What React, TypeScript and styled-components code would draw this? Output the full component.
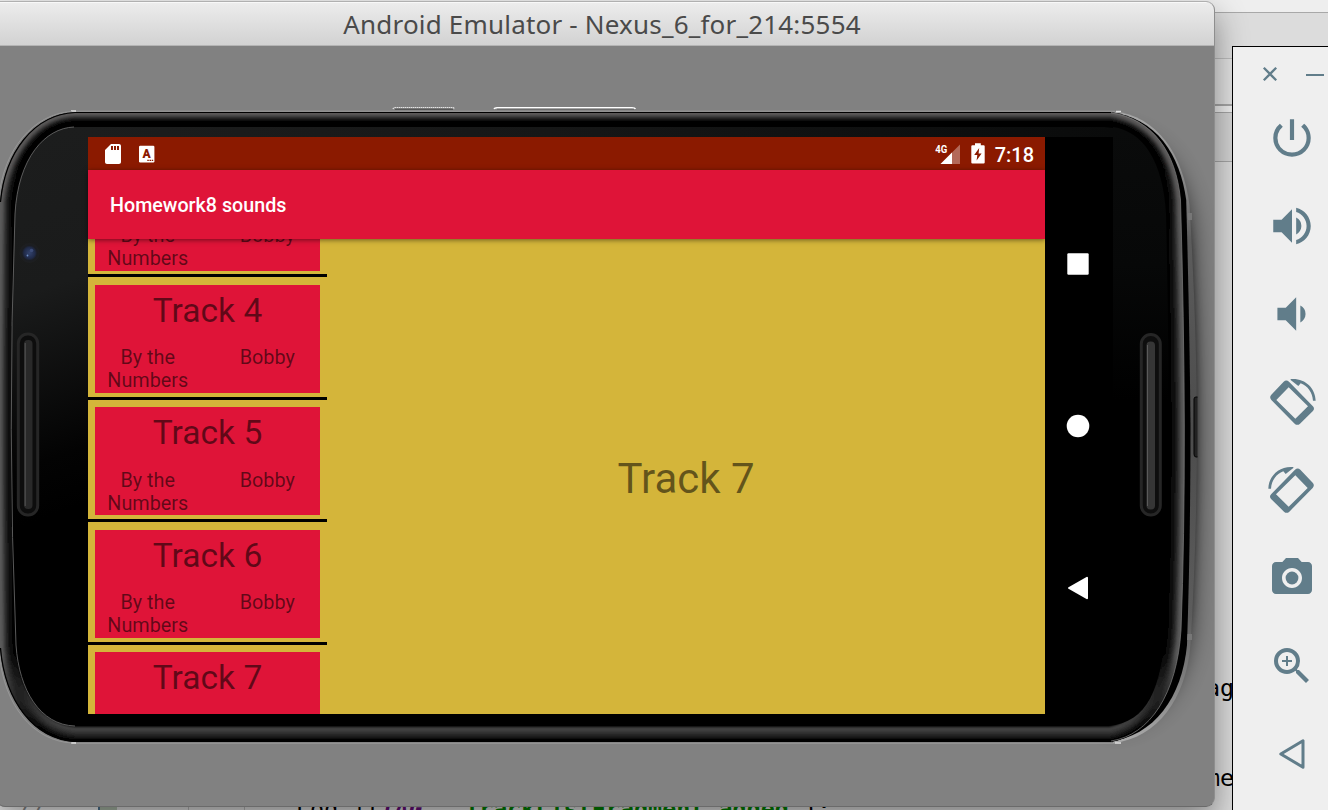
import React from 'react';
import styled, { createGlobalStyle } from 'styled-components';
import {
  MdPowerSettingsNew,
  MdVolumeUp,
  MdVolumeDown,
  MdCameraAlt,
  MdZoomIn,
  MdSdCard,
} from 'react-icons/md';

const SLATE = '#617d8a';
const RED = '#df1438';
const RUST = '#8b1a00';
const GOLD = '#d4b53a';

const GlobalStyle = createGlobalStyle`
  html, body { margin: 0; padding: 0; overflow: hidden; }
  * { box-sizing: border-box; }
`;

const Desktop = styled.main`
  position: relative;
  width: 1328px;
  height: 810px;
  overflow: hidden;
  background: #d6d6d6;
  font-family: Roboto, "Liberation Sans", sans-serif;
`;

/* ---------- code editor behind the emulator ---------- */

const Editor = styled.div`
  display: flex;
  flex-direction: column;
  width: 1328px;
  height: 810px;
`;

const Strip = styled.div<{ $h: number; $bg: string; $line: string; $lw?: number }>`
  flex: none;
  height: ${(p) => p.$h}px;
  background: ${(p) => p.$bg};
  border-bottom: ${(p) => p.$lw ?? 1}px solid ${(p) => p.$line};
`;

const Code = styled.div`
  flex: 1;
  padding-top: 510.5px;
  background: #dcdcdc;
  font: 23.4px/30.2px "DejaVu Sans Mono", monospace;
  color: #000;
`;

const CodeLine = styled.div<{ $indent: number }>`
  height: 30.2px;
  padding-left: ${(p) => p.$indent}px;
  white-space: pre;
`;

const LastLine = styled.div`
  display: flex;
  height: 30px;
  padding-top: 1px;
  white-space: pre;
`;

const Gutter = styled.span`
  width: 98px;
  padding-left: 18px;
  background: #ececec;
  color: #8a8a8a;
  font-style: italic;
`;

const FoldMark = styled.span`
  width: 19px;
  margin-right: 71px;
  border-left: 2px solid #4d7390;
  background: #a9b8a6;
`;

const IndentGuide = styled.span<{ $w: number }>`
  width: ${(p) => p.$w}px;
  border-left: 1px solid #b4b4b4;
`;

const Constant = styled.em`
  color: #660e7a;
  font-weight: 700;
`;

const Str = styled.b`
  color: #008000;
`;

/* ---------- emulator window ---------- */

const Window = styled.section`
  position: absolute;
  left: -4px;
  top: 1px;
  width: 1219px;
  height: 806px;
  display: flex;
  flex-direction: column;
  overflow: hidden;
  border: 1px solid #a0a0a0;
  border-color: #b0b0b0 #8e8e8e #6a6a6a;
  border-radius: 0 9px 9px 9px;
  background: #818181;
`;

const WindowShadow = styled.div`
  position: absolute;
  left: -4px;
  top: 1px;
  width: 1219px;
  height: 806px;
  border-radius: 9px;
  box-shadow: 0 14px 32px rgba(0, 0, 0, 0.42);
`;

const TitleBar = styled.header`
  flex: none;
  display: flex;
  align-items: center;
  justify-content: center;
  height: 44px;
  padding-right: 7px;
  border-top: 1px solid #f8f8f8;
  border-bottom: 1px solid #b4b4b4;
  background: linear-gradient(#ececec, #d2d2d2);
  color: #4a4a4a;
  font-family: "Noto Sans", sans-serif;
  font-size: 26px;
  line-height: 42px;
  letter-spacing: 0.19px;
  white-space: nowrap;
`;

const Stage = styled.div`
  position: relative;
  flex: 1;
  padding: 91px 0 0 91px;
`;

const PhoneArt = styled.svg`
  position: absolute;
  left: 3px;
  top: 0;
  width: 1214px;
  height: 761px;
`;

const Display = styled.div`
  position: relative;
  display: flex;
  width: 1025px;
  height: 577.4px;
  background: #000;
`;

const AppScreen = styled.div`
  display: flex;
  flex-direction: column;
  width: 957px;
  height: 100%;
  background: ${GOLD};
`;

const StatusBar = styled.div`
  flex: none;
  display: flex;
  align-items: center;
  justify-content: space-between;
  height: 33.4px;
  padding: 0 11px 0 13px;
  background: ${RUST};
  color: #fff;
`;

const StatusGroup = styled.div<{ $gap: number }>`
  display: flex;
  align-items: center;
  gap: ${(p) => p.$gap}px;
`;

const Clock = styled.span`
  font-size: 20px;
  font-weight: 500;
  line-height: 34px;
  padding-top: 2px;
`;

const AppBar = styled.div`
  position: relative;
  z-index: 1;
  flex: none;
  display: flex;
  align-items: center;
  height: 68.2px;
  padding: 2px 0 0 22px;
  background: ${RED};
  box-shadow: 0 1px 5px rgba(0, 0, 0, 0.5);
  color: #fff;
  font-size: 19.7px;
  font-weight: 500;
`;

const Panes = styled.div`
  flex: 1;
  display: flex;
  min-height: 0;
`;

const TrackList = styled.div`
  width: 239px;
  overflow: hidden;
`;

const TrackItems = styled.div`
  margin-top: -83.6px;
`;

const TrackItem = styled.div`
  height: 122.45px;
  padding: 7.4px 7px 0;
  border-bottom: 3px solid #000;
`;

const TrackCard = styled.div`
  height: 108.2px;
  padding-top: 6px;
  background: ${RED};
  color: rgba(0, 0, 0, 0.56);
`;

const TrackName = styled.div`
  height: 55.6px;
  font-size: 33.6px;
  line-height: 39px;
  text-align: center;
`;

const TrackMeta = styled.div`
  display: flex;
  margin: 0 -7px;
  font-size: 19.8px;
  line-height: 23px;
  text-align: center;
`;

const MetaCell = styled.div`
  flex: 1;
  padding: 0 15px;
`;

const Detail = styled.div`
  flex: 1;
  display: flex;
  align-items: center;
  justify-content: center;
  padding-top: 4px;
  color: rgba(0, 0, 0, 0.54);
  font-size: 42px;
`;

const NavBar = styled.nav`
  flex: 1;
  display: flex;
  flex-direction: column;
  justify-content: center;
`;

const NavSlot = styled.div`
  display: flex;
  align-items: center;
  justify-content: center;
  height: 162px;
  padding-right: 2px;
`;

/* ---------- emulator tool strip ---------- */

const Tools = styled.aside`
  position: absolute;
  left: 1232px;
  top: 46px;
  width: 118px;
  height: 770px;
  display: flex;
  flex-direction: column;
  border-top: 1px solid #000;
  border-left: 1px solid #000;
  background: #efefef;
  color: ${SLATE};
`;

const ToolHeader = styled.div`
  flex: none;
  display: flex;
  align-items: center;
  gap: 28px;
  height: 47px;
  padding: 7px 0 0 29px;
`;

const Tool = styled.div`
  flex: none;
  display: flex;
  align-items: center;
  justify-content: center;
  height: 88px;
`;

const BODY =
  'M75 112 H1111 C1152 119 1176 151 1180.500 200 Q1184 320 1184.300 425 Q1184.500 540 1181 630 C1177 694 1150 735 1111 742 H75 C34 739 5 702 0 648 Q-3 425 0 202 C5 152 34 114 75 112 Z';
const GLASS =
  'M74 127 H1104 C1142 129 1163 160 1166 214 Q1171 425 1166 625 C1161 690 1148 722 1108 726 H75 C40 725 19 690 16 645 Q7 430 15 214 C18 158 45 128 74 127 Z';
const RIM =
  'M1113 111.300 C1158 116 1183 155 1189.500 205 Q1196.500 320 1197 425 Q1197 540 1190.500 645 C1186 698 1158 738 1113 743 Z';
const STRIPE =
  'M1108 112 C1157 117 1180 155 1186.200 200 Q1189.500 320 1190.500 425 Q1190.500 540 1187 645 C1182 697 1155 736 1108 742 Z';

/* bevel profile, from the outer edge inwards: [depth, colour at top, colour at sides, colour at bottom] */
const BEVEL: [number, string, string, string][] = [
  [15, '#020202', '#040404', '#444444'],
  [13, '#020202', '#070707', '#404040'],
  [11, '#030303', '#0c0c0c', '#363636'],
  [9, '#0a0a0a', '#1a1a1a', '#2a2a2a'],
  [7, '#222121', '#2c2c2c', '#1b1b1b'],
  [5, '#434242', '#424242', '#0c0c0c'],
  [3, '#5c5a5a', '#5a5a5a', '#060606'],
];

const PhoneFrame = () => (
  <PhoneArt viewBox="0 46 1214 761">
    <defs>
      {BEVEL.map(([depth, top, side, bottom]) => (
        <linearGradient key={depth} id={`bevel${depth}`} x1="0" y1="112" x2="0" y2="742" gradientUnits="userSpaceOnUse">
          <stop offset="0.03" stopColor={top} />
          <stop offset="0.2" stopColor={side} />
          <stop offset="0.86" stopColor={side} />
          <stop offset="0.975" stopColor={bottom} />
        </linearGradient>
      ))}
      <linearGradient id="glass" x1="60" y1="130" x2="180" y2="470" gradientUnits="userSpaceOnUse">
        <stop offset="0" stopColor="#1c1d1d" />
        <stop offset="0.4" stopColor="#1a1b1b" />
        <stop offset="0.85" stopColor="#030303" />
        <stop offset="1" stopColor="#000" />
      </linearGradient>
      <linearGradient id="glassRight" x1="0" y1="130" x2="0" y2="400" gradientUnits="userSpaceOnUse">
        <stop offset="0" stopColor="#0a0b0b" />
        <stop offset="0.5" stopColor="#070808" />
        <stop offset="1" stopColor="#000" />
      </linearGradient>
      <linearGradient id="glassTop" x1="88" y1="0" x2="1113" y2="0" gradientUnits="userSpaceOnUse">
        <stop offset="0" stopColor="#1c1d1d" />
        <stop offset="0.45" stopColor="#161717" />
        <stop offset="1" stopColor="#0a0b0b" />
      </linearGradient>
      <linearGradient id="rim" x1="0" y1="113" x2="0" y2="742" gradientUnits="userSpaceOnUse">
        <stop offset="0" stopColor="#a8a8a8" />
        <stop offset="0.1" stopColor="#8a8a8a" />
        <stop offset="0.2" stopColor="#5c5c5c" />
        <stop offset="0.5" stopColor="#4c4c4c" />
        <stop offset="0.8" stopColor="#5c5c5c" />
        <stop offset="0.92" stopColor="#858585" />
        <stop offset="1" stopColor="#aaa" />
      </linearGradient>
      <radialGradient id="lens">
        <stop offset="0" stopColor="#33436e" />
        <stop offset="0.55" stopColor="#202a48" />
        <stop offset="0.75" stopColor="#1b1d22" />
        <stop offset="1" stopColor="#1e1f20" />
      </radialGradient>
      <filter id="shadowWide" x="-50%" y="-20%" width="200%" height="140%">
        <feGaussianBlur stdDeviation="13" />
      </filter>
      <filter id="shadowTight" x="-50%" y="-20%" width="200%" height="140%">
        <feGaussianBlur stdDeviation="5" />
      </filter>
      <filter id="smooth" filterUnits="userSpaceOnUse" x="-20" y="90" width="1240" height="670">
        <feGaussianBlur stdDeviation="0.9" />
      </filter>
      <clipPath id="bodyClip">
        <path d={BODY} />
      </clipPath>
    </defs>

    {/* soft shadow to the right of the handset */}
    <path d="M1110 135 C1155 142 1182 170 1189 230 Q1200 425 1189 620 C1183 690 1148 718 1110 724 Z" fill="#000" opacity="0.8" filter="url(#shadowWide)" />
    <path d="M1150 190 Q1186 190 1190 260 Q1201 425 1190 600 Q1184 665 1150 670 Z" fill="#000" opacity="0.55" filter="url(#shadowTight)" />

    {/* side keys on the upper edge */}
    <path d="M393 109 Q393.500 107.500 396 107.500 H451 Q454 107.500 454.500 109" fill="none" stroke="#e4e4e4" strokeWidth="1.200" strokeDasharray="1.500 0.500" />
    <path d="M395 109.300 H453" stroke="#4c4c4c" strokeWidth="1" />
    <path d="M494 109 Q494.500 107.700 497 107.700 H632 Q635 107.700 635.500 109" fill="none" stroke="#fff" strokeWidth="1.400" />
    <path d="M497 109.200 H634" stroke="#5c5c5c" strokeWidth="0.800" />

    {/* metal rim */}
    <path d={RIM} fill="url(#rim)" />
    <path d={STRIPE} fill="#000" />
    <path d="M75 111.200 H1115 M75 743.300 H1115" stroke="#989898" strokeWidth="1" fill="none" />
    <path d="M71 111 H76 M71 743 H76 M1116 111.500 H1121 M1115 743 H1121" stroke="#e0e0e0" strokeWidth="1.300" />
    <path d="M1187.500 213 H1192 V220 H1188 Z M1187.500 634 H1192 V640 H1187 Z" fill="#777" />
    <path d="M1197.500 397 H1196 Q1194 397 1194 399 V454 Q1194 457 1196 457 H1197.500" fill="#222" stroke="#050505" strokeWidth="1" />

    {/* bevelled body */}
    <path d={BODY} fill="#000" />
    <g clipPath="url(#bodyClip)">
      <g filter="url(#smooth)" fill="none">
        {BEVEL.map(([depth]) => (
          <path key={depth} d={BODY} stroke={`url(#bevel${depth})`} strokeWidth={depth * 2} />
        ))}
      </g>
    </g>
    <path d="M1111 113 C1152 119 1176 151 1180.500 200 Q1184 320 1184.300 425 Q1184.500 540 1181 630 C1177 694 1150 735 1111 741" fill="none" stroke="#747474" strokeWidth="0.800" />
    <path d="M1111 112.500 H75 C34 114.500 5 152 0.500 202 M0.500 648 C5 702 34 739 75 741.500 H1111" fill="none" stroke="#000" strokeWidth="1.200" />
    <path d="M72 111.500 C33 113.500 4 150 -1 196 M-0.500 655 C4 705 33 741 72 743" fill="none" stroke="#a0a0a0" strokeWidth="0.700" />

    {/* glass */}
    <path d={GLASS} fill="#000" />
    <path d="M1113 127 C1142 131 1163 160 1166 214 Q1168.500 320 1168.500 400 H1113 Z" fill="url(#glassRight)" />
    <path d="M88 127 H1104 L1113 128 V138 H88 Z" fill="url(#glassTop)" />
    <path d="M88.500 127 H74 C45 128 18 158 15 214 Q7 430 16 645 C19 690 40 725 75 726 H88.500 Z" fill="url(#glass)" />
    <path d="M74 127 C45 128 18 158 15 214 Q7 430 16 645 C19 690 40 725 75 726" fill="none" stroke="#707070" strokeWidth="0.800" />

    {/* camera and speaker grilles */}
    <circle cx="29.500" cy="253" r="10" fill="url(#lens)" />
    <circle cx="27.500" cy="255.500" r="0.900" fill="#6f8fc4" />
    <circle cx="31.500" cy="250.500" r="1.800" fill="#3c4c78" />
    <rect x="18.300" y="334" width="19.400" height="181" rx="9.500" fill="#0d0d0d" stroke="#262626" strokeWidth="3" />
    <rect x="24" y="340" width="8.500" height="169" rx="4" fill="#292929" />
    <path d="M25.200 343 V506" stroke="#555" strokeWidth="1" />
    <rect x="1141.300" y="334.500" width="19" height="180.500" rx="9.500" fill="#0e0e0e" stroke="#262626" strokeWidth="3" />
    <rect x="1146.500" y="341.500" width="8.500" height="168" rx="4" fill="#363636" />
    <path d="M1147.500 345 V506" stroke="#5a5a5a" strokeWidth="1" />
  </PhoneArt>
);

const KeyboardIcon = () => (
  <svg width="16" height="18" viewBox="0 0 16 18">
    <rect x="0" y="0.800" width="15.400" height="16.600" rx="1.200" fill="#fff" />
    <text x="7.500" y="12.600" textAnchor="middle" fontFamily="Roboto, sans-serif" fontWeight="900" fontSize="12" fill={RUST}>A</text>
    <path d="M8.300 15.300 H14.400" stroke={RUST} strokeWidth="1.200" strokeDasharray="1.500 0.700" />
  </svg>
);

const SignalIcon = () => (
  <svg width="26" height="22" viewBox="0 0 26 22">
    <path d="M25 1.500 V21 H5.500 Z" fill="#fff" opacity="0.35" />
    <path d="M17 9.500 V21 H5.500 Z" fill="#fff" />
    <text x="0.200" y="10" fontFamily="Roboto, sans-serif" fontWeight="700" fontSize="11" fill="#fff" stroke={RUST} strokeWidth="1.600" paintOrder="stroke" textLength="12" lengthAdjust="spacingAndGlyphs">4G</text>
  </svg>
);

const BatteryIcon = () => (
  <svg width="14" height="21" viewBox="0 0 14 21">
    <path fill="#fff" d="M4 0.300 H9.800 V2.200 H12.600 Q13.700 2.200 13.700 3.300 V19.400 Q13.700 20.500 12.600 20.500 H1.400 Q0.300 20.500 0.300 19.400 V3.300 Q0.300 2.200 1.400 2.200 H4 Z" />
    <path fill={RUST} d="M8.200 5 L3.200 12 H6.300 L5.600 17.600 L10.600 10.400 H7.600 Z" />
  </svg>
);

const RotateIcon = ({ flip }: { flip?: boolean }) => (
  <svg width="48" height="50" viewBox="120 1012 144 150">
    <g fill={SLATE} transform={flip ? 'translate(384 0) scale(-1 1)' : undefined}>
      <path
        fillRule="evenodd"
        d="M167 1026 Q175 1019 183 1026 L254 1099 Q262 1107 254 1115 L216 1152 Q208 1159 200 1152 L130 1081 Q123 1073 130 1065 Z M182 1043 L145 1081 L202 1137 L240 1100 Z"
      />
      <path d="M188 1018 C230 1014 262 1044 263 1083 H255 C253 1058 240 1040 218 1031 L211 1039 L188 1021 Z" />
    </g>
  </svg>
);

const tracks = ['Track 3', 'Track 4', 'Track 5', 'Track 6', 'Track 7'];

export default function App() {
  return (
    <Desktop>
      <GlobalStyle />
      <Editor>
        <Strip $h={13} $bg="#eeeeee" $line="#a8a8a8" />
        <Strip $h={46} $bg="#dcdcdc" $line="#bdbdbd" />
        <Strip $h={47} $bg="#e2e2e2" $line="#a6a6a6" $lw={2} />
        <Strip $h={7} $bg="#eeeeee" $line="#a6a6a6" />
        <Strip $h={49} $bg="#d4d4d4" $line="#a6a6a6" />
        <Code>
          <CodeLine $indent={1206}>ag</CodeLine>
          <CodeLine $indent={0}> </CodeLine>
          <CodeLine $indent={0}> </CodeLine>
          <CodeLine $indent={1206}>me</CodeLine>
          <LastLine>
            <Gutter>//</Gutter>
            <FoldMark />
            <IndentGuide $w={56} />
            <IndentGuide $w={52} />
            Log.i(<Constant>TAG</Constant>, <Str>"TrackListFragment added"</Str>);
          </LastLine>
        </Code>
      </Editor>

      <WindowShadow />
      <Window>
        <TitleBar>Android Emulator - Nexus_6_for_214:5554</TitleBar>
        <Stage>
          <PhoneFrame />
          <Display>
            <AppScreen>
              <StatusBar>
                <StatusGroup $gap={14}>
                  <MdSdCard size={24} />
                  <KeyboardIcon />
                </StatusGroup>
                <StatusGroup $gap={10}>
                  <SignalIcon />
                  <BatteryIcon />
                  <Clock>7:18</Clock>
                </StatusGroup>
              </StatusBar>
              <AppBar>Homework8 sounds</AppBar>
              <Panes>
                <TrackList>
                  <TrackItems>
                    {tracks.map((name) => (
                      <TrackItem key={name}>
                        <TrackCard>
                          <TrackName>{name}</TrackName>
                          <TrackMeta>
                            <MetaCell>By the Numbers</MetaCell>
                            <MetaCell>Bobby</MetaCell>
                          </TrackMeta>
                        </TrackCard>
                      </TrackItem>
                    ))}
                  </TrackItems>
                </TrackList>
                <Detail>Track 7</Detail>
              </Panes>
            </AppScreen>
            <NavBar>
              <NavSlot>
                <svg width="22" height="22" viewBox="0 0 22 22"><rect x="0.300" y="0.300" width="21.400" height="21.400" rx="1.200" fill="#fff" /></svg>
              </NavSlot>
              <NavSlot>
                <svg width="24" height="24" viewBox="0 0 24 24"><circle cx="12" cy="12" r="11.300" fill="#fff" /></svg>
              </NavSlot>
              <NavSlot>
                <svg width="22" height="24" viewBox="0 0 22 24"><path d="M2 12 L20 1.800 V22.200 Z" fill="#fff" stroke="#fff" strokeWidth="2" strokeLinejoin="round" /></svg>
              </NavSlot>
            </NavBar>
          </Display>
        </Stage>
      </Window>

      <Tools>
        <ToolHeader>
          <svg width="16" height="16" viewBox="0 0 16 16"><path d="M1.800 1.800 L14.200 14.200 M14.200 1.800 L1.800 14.200" stroke={SLATE} strokeWidth="2.300" /></svg>
          <svg width="18" height="16" viewBox="0 0 18 16"><path d="M0 9 H18" stroke={SLATE} strokeWidth="2" /></svg>
        </ToolHeader>
        <Tool><MdPowerSettingsNew size={50} /></Tool>
        <Tool><MdVolumeUp size={50} /></Tool>
        <Tool><MdVolumeDown size={50} /></Tool>
        <Tool><RotateIcon /></Tool>
        <Tool><RotateIcon flip /></Tool>
        <Tool><MdCameraAlt size={48} /></Tool>
        <Tool><MdZoomIn size={48} /></Tool>
        <Tool>
          <svg width="28" height="32" viewBox="0 0 28 32"><path d="M2.800 16 L25 2.800 V29.200 Z" fill="none" stroke={SLATE} strokeWidth="3" strokeLinejoin="round" /></svg>
        </Tool>
      </Tools>
    </Desktop>
  );
}
